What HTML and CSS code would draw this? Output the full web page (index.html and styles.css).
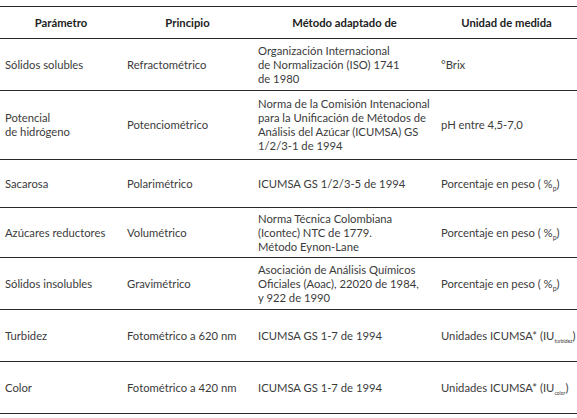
FILE: index.html
```html
<!DOCTYPE html>
<html lang="es">
<head>
<meta charset="utf-8">
<link rel="stylesheet" href="styles.css">
</head>
<body>
<table class="tabla">
  <colgroup>
    <col class="c1"><col class="c2"><col class="c3"><col class="c4">
  </colgroup>
  <thead>
    <tr class="head">
      <th>Parámetro</th><th>Principio</th><th>Método adaptado de</th><th>Unidad de medida</th>
    </tr>
  </thead>
  <tbody>
    <tr class="h52">
      <td>Sólidos solubles</td><td>Refractométrico</td>
      <td>Organización Internacional<br>de Normalización (ISO) 1741<br>de 1980</td>
      <td>°Brix</td>
    </tr>
    <tr class="h69">
      <td>Potencial<br>de hidrógeno</td><td>Potenciométrico</td>
      <td>Norma de la Comisión Intenacional<br>para la Unificación de Métodos de<br>Análisis del Azúcar (ICUMSA) GS<br>1/2/3-1 de 1994</td>
      <td>pH entre 4,5-7,0</td>
    </tr>
    <tr class="h48">
      <td>Sacarosa</td><td>Polarimétrico</td>
      <td>ICUMSA GS 1/2/3-5 de 1994</td>
      <td>Porcentaje en peso ( %<sub>p</sub>)</td>
    </tr>
    <tr class="h50">
      <td>Azúcares reductores</td><td>Volumétrico</td>
      <td>Norma Técnica Colombiana<br>(Icontec) NTC de 1779.<br>Método Eynon-Lane</td>
      <td>Porcentaje en peso ( %<sub>p</sub>)</td>
    </tr>
    <tr class="h52">
      <td>Sólidos insolubles</td><td>Gravimétrico</td>
      <td>Asociación de Análisis Químicos<br>Oficiales (Aoac), 22020 de 1984,<br>y 922 de 1990</td>
      <td>Porcentaje en peso ( %<sub>p</sub>)</td>
    </tr>
    <tr class="h52">
      <td>Turbidez</td><td>Fotométrico a 620 nm</td>
      <td>ICUMSA GS 1-7 de 1994</td>
      <td>Unidades ICUMSA* (IU<sub class="tiny">turbidez</sub>)</td>
    </tr>
    <tr class="h52">
      <td>Color</td><td>Fotométrico a 420 nm</td>
      <td>ICUMSA GS 1-7 de 1994</td>
      <td>Unidades ICUMSA* (IU<sub class="tiny">color</sub>)</td>
    </tr>
  </tbody>
</table>
</body>
</html>
```
FILE: styles.css
```css
html, body {
  margin: 0;
  padding: 0;
  background: #ffffff;
}
body {
  padding-top: 6px;
  font-family: "Lato", "Liberation Sans", sans-serif;
  font-size: 11.25px;
  color: #3b3b3b;
}
.tabla {
  width: 577px;
  border-collapse: collapse;
  table-layout: fixed;
}
.c1 { width: 122px; }
.c2 { width: 131px; }
.c3 { width: 183px; }
.c4 { width: 141px; }
.tabla th {
  font-weight: bold;
  color: #222;
  text-align: center;
  height: 31px;
  padding: 0;
  border-top: 1px solid #2a2a2a;
  border-bottom: 1px solid #2a2a2a;
}
.tabla td {
  padding: 0 0 0 5px;
  line-height: 14px;
  vertical-align: middle;
  text-align: left;
  white-space: nowrap;
  border-bottom: 1px solid #2a2a2a;
}
.h48 td { height: 47px; }
.h50 td { height: 49px; }
.h52 td { height: 51px; }
.h69 td { height: 68px; }
sub {
  font-size: 7px;
  line-height: 0;
  vertical-align: -3px;
}
sub.tiny {
  font-size: 5px;
  vertical-align: -3px;
}
```
